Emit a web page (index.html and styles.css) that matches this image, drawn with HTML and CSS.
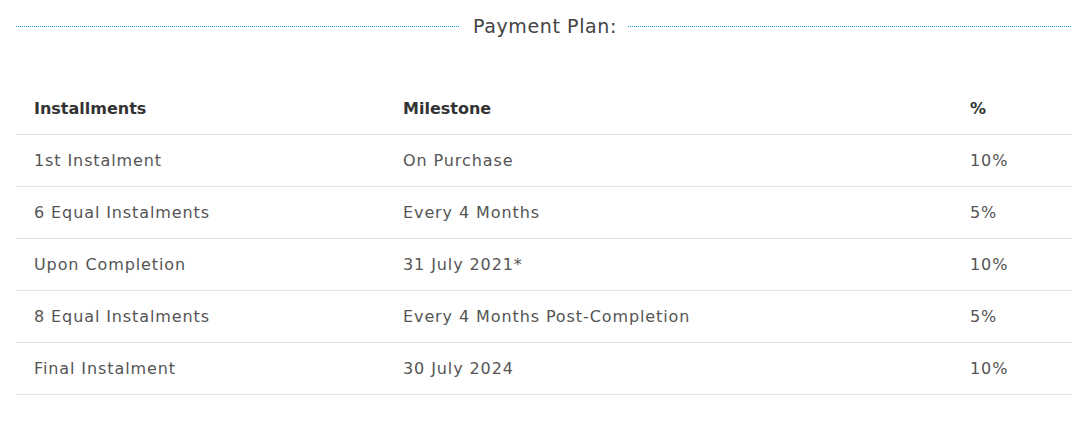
FILE: index.html
```html
<!DOCTYPE html>
<html>
<head>
<meta charset="utf-8">
<link rel="stylesheet" href="styles.css">
</head>
<body>
<div class="page">
  <div class="heading">
    <span class="rule"></span>
    <h2 class="title">Payment Plan:</h2>
    <span class="rule"></span>
  </div>
  <table class="plan">
    <thead>
      <tr><th class="c1">Installments</th><th class="c2">Milestone</th><th class="c3">%</th></tr>
    </thead>
    <tbody>
      <tr><td>1st Instalment</td><td>On Purchase</td><td>10%</td></tr>
      <tr><td>6 Equal Instalments</td><td>Every 4 Months</td><td>5%</td></tr>
      <tr><td>Upon Completion</td><td>31 July 2021*</td><td>10%</td></tr>
      <tr><td>8 Equal Instalments</td><td>Every 4 Months Post-Completion</td><td>5%</td></tr>
      <tr><td>Final Instalment</td><td>30 July 2024</td><td>10%</td></tr>
    </tbody>
  </table>
</div>
</body>
</html>
```
FILE: styles.css
```css
html, body { margin: 0; padding: 0; background: #fff; }
body { font-family: "DejaVu Sans", sans-serif; color: #444; }
.page { padding: 0 15px 0 16px; }
.heading { display: flex; align-items: center; height: 53px; }
.rule { flex: 1; height: 1px; background: repeating-linear-gradient(to right, #12a2ec 0 1px, transparent 1px 2px); }
.title { margin: 0; padding: 0 11px 0 13px; font-size: 19px; font-weight: 400; letter-spacing: 0.6px; color: #444; line-height: 53px; }
.plan { width: 100%; border-collapse: collapse; margin-top: 30px; }
.plan th, .plan td { text-align: left; padding: 0 0 0 18px; height: 51px; border-bottom: 1px solid #e2e2e2; font-size: 16px; }
.plan th { font-weight: 700; color: #333; }
.plan td { color: #555; font-weight: 400; letter-spacing: 0.9px; }
.c1 { width: 351px; }
.c2 { width: 549px; }
```
